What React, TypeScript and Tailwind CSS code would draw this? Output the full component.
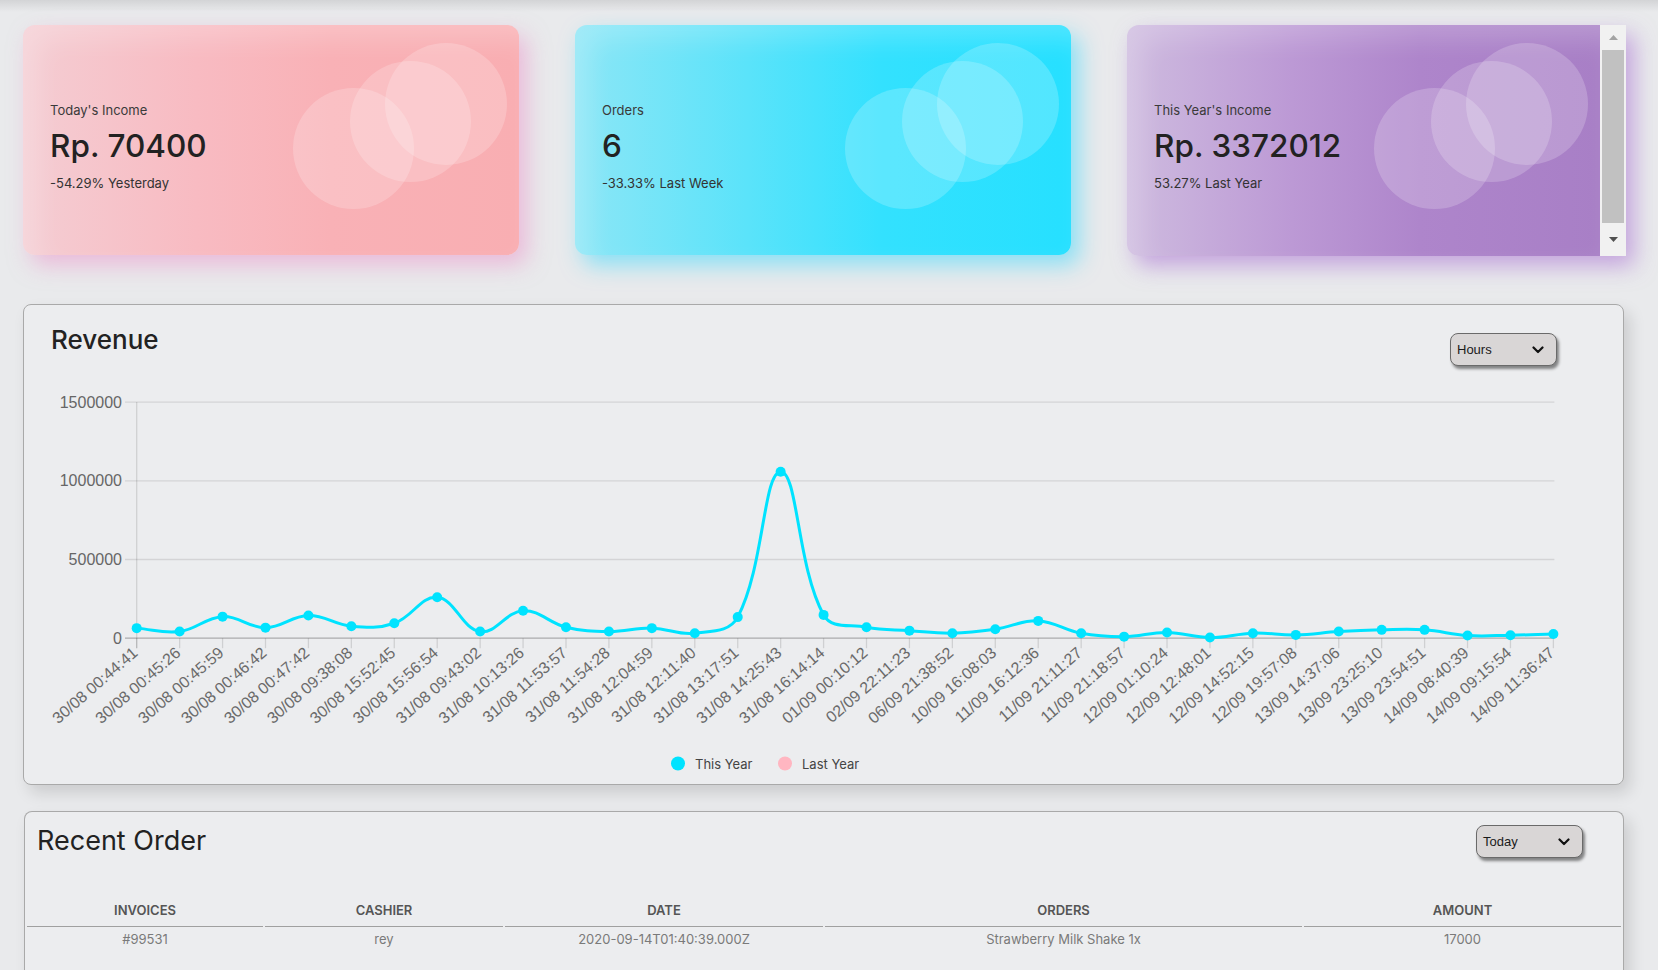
import React from "react";

const labels = [
  "30/08 00:44:41", "30/08 00:45:26", "30/08 00:45:59", "30/08 00:46:42", "30/08 00:47:42",
  "30/08 09:38:08", "30/08 15:52:45", "30/08 15:56:54", "31/08 09:43:02", "31/08 10:13:26",
  "31/08 11:53:57", "31/08 11:54:28", "31/08 12:04:59", "31/08 12:11:40", "31/08 13:17:51",
  "31/08 14:25:43", "31/08 16:14:14", "01/09 00:10:12", "02/09 22:11:23", "06/09 21:38:52",
  "10/09 16:08:03", "11/09 16:12:36", "11/09 21:11:27", "11/09 21:18:57", "12/09 01:10:24",
  "12/09 12:48:01", "12/09 14:52:15", "12/09 19:57:08", "13/09 14:37:06", "13/09 23:25:10",
  "13/09 23:54:51", "14/09 08:40:39", "14/09 09:15:54", "14/09 11:36:47",
];

// values in thousands (Rp)
const values = [
  64, 42, 137, 67, 144, 76, 95, 260, 42, 174, 70, 42, 64, 32, 134, 1058, 148, 70, 48, 32, 57, 110,
  32, 10, 36, 4, 32, 21, 42, 53, 53, 17, 19, 27,
];

const X0 = 136.7;
const DX = 42.93;
const Y0 = 637.2;
const STEP = 78.7;
const PER_K = STEP / 500;
const TOP = Y0 - 3 * STEP;

type Pt = { x: number; y: number };

function splinePath(pts: Pt[], t = 0.4) {
  const clampY = (y: number) => Math.min(Y0, Math.max(TOP, y));
  const cps = pts.map((p, i) => {
    const p0 = pts[i - 1] || p;
    const p2 = pts[i + 1] || p;
    const d01 = Math.hypot(p.x - p0.x, p.y - p0.y);
    const d12 = Math.hypot(p2.x - p.x, p2.y - p.y);
    let s01 = d01 / (d01 + d12);
    let s12 = d12 / (d01 + d12);
    if (isNaN(s01)) s01 = 0;
    if (isNaN(s12)) s12 = 0;
    const fa = t * s01;
    const fb = t * s12;
    return {
      px: p.x - fa * (p2.x - p0.x),
      py: clampY(p.y - fa * (p2.y - p0.y)),
      nx: p.x + fb * (p2.x - p0.x),
      ny: clampY(p.y + fb * (p2.y - p0.y)),
    };
  });
  let d = `M${pts[0].x},${pts[0].y}`;
  for (let i = 1; i < pts.length; i++) {
    d += ` C${cps[i - 1].nx},${cps[i - 1].ny} ${cps[i].px},${cps[i].py} ${pts[i].x},${pts[i].y}`;
  }
  return d;
}

function RevenueChart() {
  const pts = values.map((v, i) => ({ x: X0 + i * DX, y: Y0 - v * PER_K }));
  const last = X0 + (values.length - 1) * DX;
  const yTicks = ["0", "500000", "1000000", "1500000"];

  return (
    <svg width={1599} height={413} viewBox="24 370 1599 413" className="block">
      {yTicks.map((t, i) => {
        const y = Y0 - i * STEP;
        return (
          <g key={t}>
            <line x1={125} x2={last + 1} y1={y} y2={y} stroke={i === 0 ? "rgba(0,0,0,0.28)" : "rgba(0,0,0,0.1)"} strokeWidth={1.3} />
            <text x={122} y={y} textAnchor="end" dominantBaseline="central" fontSize={16} fill="#666" fontFamily="'Liberation Sans', Arial, sans-serif">
              {t}
            </text>
          </g>
        );
      })}
      <line x1={X0} x2={X0} y1={TOP} y2={Y0 + 10} stroke="rgba(0,0,0,0.12)" strokeWidth={1.3} />
      {pts.map((p, i) => (
        <line key={i} x1={p.x} x2={p.x} y1={Y0} y2={Y0 + 10} stroke="rgba(0,0,0,0.12)" strokeWidth={1.3} />
      ))}
      {labels.map((l, i) => (
        <text
          key={l}
          transform={`translate(${X0 + i * DX - 1.5},${Y0 + 12}) rotate(-41)`}
          textAnchor="end"
          dominantBaseline="central"
          fontSize={16}
          fill="#6a6a6a"
          fontFamily="'Liberation Sans', Arial, sans-serif"
        >
          {l}
        </text>
      ))}
      <path d={splinePath(pts)} fill="none" stroke="#00e3ff" strokeWidth={3} />
      {pts.map((p, i) => (
        <circle key={i} cx={p.x} cy={p.y} r={5} fill="#00e3ff" />
      ))}
      <circle cx={678} cy={762.5} r={7} fill="#00e3ff" />
      <text x={695} y={763} dominantBaseline="central" fontSize={13} fill="#444" fontFamily="Inter, sans-serif">
        This Year
      </text>
      <circle cx={785} cy={762.5} r={7} fill="#ffb6c1" />
      <text x={802} y={763} dominantBaseline="central" fontSize={13} fill="#444" fontFamily="Inter, sans-serif">
        Last Year
      </text>
    </svg>
  );
}

// three translucent circles, anchored from the right edge of the card
function Circles() {
  return (
    <>
      <div className="absolute right-[105px] top-[63px] h-[121px] w-[121px] rounded-full bg-white/20" />
      <div className="absolute right-[48px] top-[36px] h-[121px] w-[121px] rounded-full bg-white/20" />
      <div className="absolute right-[12px] top-[18px] h-[122px] w-[122px] rounded-full bg-white/20" />
    </>
  );
}

function StatText({ label, value, sub }: { label: string; value: string; sub: string }) {
  return (
    <div className="relative pl-[27px] pt-[77px]">
      <div className="text-[13px] leading-[16px] text-[#3a3a3a]">{label}</div>
      <div className="mt-[8px] text-[31.5px] font-medium leading-[40px] text-[#222]">{value}</div>
      <div className="mt-[9px] text-[13px] leading-[16px] text-[#333]">{sub}</div>
    </div>
  );
}

function Chevron() {
  return (
    <svg width="12" height="8" viewBox="0 0 12 8" className="block">
      <path d="M1.5 1.5 L6 6 L10.5 1.5" fill="none" stroke="#111" strokeWidth="2.2" strokeLinecap="round" strokeLinejoin="round" />
    </svg>
  );
}

function FakeSelect({ label }: { label: string }) {
  return (
    <div className="flex h-[33px] w-[107px] items-center justify-between rounded-[8px] border border-[#6a6a6a] bg-[#d9d6d6] pl-[6px] pr-[12px] shadow-[2px_3px_3px_rgba(0,0,0,0.45)]">
      <span className="font-['Liberation_Sans',Arial,sans-serif] text-[13px] text-[#1a1a1a]">{label}</span>
      <Chevron />
    </div>
  );
}

export default function App() {
  return (
    <div className="relative min-h-screen w-full bg-[#e9eaec] font-['Inter',sans-serif]">
      <div className="pointer-events-none absolute inset-x-0 top-0 h-[12px] bg-gradient-to-b from-[#d3d4d6] to-transparent" />

      <div className="pl-[23px] pt-[25px]">
        {/* stat cards */}
        <div className="flex gap-[56px]">
          <div className="relative h-[230px] w-[496px] overflow-hidden rounded-[12px] bg-[linear-gradient(90deg,#f4cdd3_0%,#f8bbc2_35%,#f9b1b6_62%,#f9aeb2_100%)] shadow-[inset_14px_14px_26px_rgba(255,255,255,0.22),8px_10px_22px_rgba(238,140,200,0.5)]">
            <Circles />
            <StatText label="Today's Income" value="Rp. 70400" sub="-54.29% Yesterday" />
          </div>

          <div className="relative h-[230px] w-[496px] overflow-hidden rounded-[12px] bg-[linear-gradient(90deg,#8ce6f6_0%,#5ae3fa_35%,#33e1fe_62%,#26e0ff_100%)] shadow-[inset_14px_14px_26px_rgba(255,255,255,0.2),8px_10px_22px_rgba(40,215,255,0.5)]">
            <Circles />
            <StatText label="Orders" value="6" sub="-33.33% Last Week" />
          </div>

          <div className="flex h-[231px] w-[499px] rounded-l-[12px] shadow-[8px_10px_22px_rgba(165,105,210,0.55)]">
            <div className="relative h-full w-[473px] overflow-hidden rounded-l-[12px] bg-[linear-gradient(90deg,#cebbdf_0%,#bc99d5_35%,#ae85cb_62%,#a87fc6_100%)] shadow-[inset_14px_14px_26px_rgba(255,255,255,0.2)]">
              <Circles />
              <StatText label="This Year's Income" value="Rp. 3372012" sub="53.27% Last Year" />
            </div>
            <div className="flex h-full w-[26px] flex-col items-center bg-[#f1f1f1]">
              <div className="flex h-[25px] items-center justify-center">
                <svg width="9" height="5" viewBox="0 0 9 5"><path d="M0 5 L4.5 0 L9 5 Z" fill="#a3a3a3" /></svg>
              </div>
              <div className="h-[173px] w-[22px] bg-[#c1c1c1]" />
              <div className="flex flex-1 items-center justify-center">
                <svg width="9" height="5" viewBox="0 0 9 5"><path d="M0 0 L9 0 L4.5 5 Z" fill="#505050" /></svg>
              </div>
            </div>
          </div>
        </div>

        {/* revenue */}
        <div className="mt-[48px] w-[1601px] rounded-[8px] border border-[#a9a9a9] bg-[#ecedef] shadow-[6px_8px_16px_rgba(0,0,0,0.13)]">
          <div className="flex h-[66px] items-start justify-between pl-[27px] pr-[66px] pt-[19px]">
            <h2 className="text-[26px] font-medium leading-[32px] text-[#222]">Revenue</h2>
            <div className="mt-[9px]">
              <FakeSelect label="Hours" />
            </div>
          </div>
          <RevenueChart />
        </div>

        {/* recent order */}
        <div className="ml-[1px] mt-[26px] w-[1600px] rounded-t-[8px] border border-b-0 border-[#a9a9a9] bg-[#ecedef] pb-[40px] shadow-[6px_8px_16px_rgba(0,0,0,0.13)]">
          <div className="flex items-start justify-between pl-[12px] pr-[40px] pt-[13px]">
            <h2 className="text-[27px] leading-[32px] text-[#222]">Recent Order</h2>
            <FakeSelect label="Today" />
          </div>
          <table className="mt-[35px] w-full table-fixed border-separate border-spacing-[2px] text-center">
            <thead>
              <tr className="text-[13px] font-semibold uppercase text-[#555]">
                <th className="h-[32px] w-[236px] border-b border-[#a0a0a0] font-semibold">Invoices</th>
                <th className="h-[32px] w-[238px] border-b border-[#a0a0a0] font-semibold">Cashier</th>
                <th className="h-[32px] w-[318px] border-b border-[#a0a0a0] font-semibold">Date</th>
                <th className="h-[32px] w-[477px] border-b border-[#a0a0a0] font-semibold">Orders</th>
                <th className="h-[32px] border-b border-[#a0a0a0] font-semibold">Amount</th>
              </tr>
            </thead>
            <tbody>
              <tr className="text-[13px] text-[#7a7a7a]">
                <td className="h-[22px]">#99531</td>
                <td className="h-[22px]">rey</td>
                <td className="h-[22px]">2020-09-14T01:40:39.000Z</td>
                <td className="h-[22px]">Strawberry Milk Shake 1x</td>
                <td className="h-[22px]">17000</td>
              </tr>
            </tbody>
          </table>
        </div>
      </div>
    </div>
  );
}
